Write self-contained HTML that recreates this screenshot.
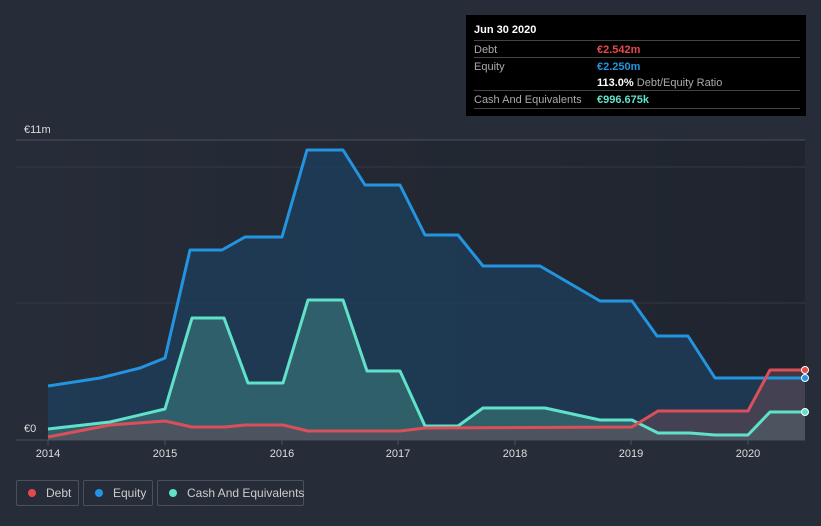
<!DOCTYPE html>
<html><head><meta charset="utf-8"><style>
body{margin:0;width:821px;height:526px;background:#262c38;font-family:"Liberation Sans",sans-serif;overflow:hidden;position:relative}
.tt{position:absolute;left:466px;top:15px;width:340px;height:101px;background:#000;color:#fff;font-size:11px}
.row{position:absolute;left:8px;width:326px;border-top:1px solid #444;height:16px}
.lab{position:absolute;left:0;top:3px;color:#aaa}
.val{position:absolute;left:123px;top:3px;font-weight:bold;white-space:nowrap}
.leg{position:absolute;top:480px;height:26px;border:1px solid #4a505c;border-radius:2px;color:#ccc;font-size:12px;line-height:25px;box-sizing:border-box;white-space:nowrap}
.dot{display:inline-block;width:8px;height:8px;border-radius:50%;margin:0 10px 0 11px;vertical-align:0}
</style></head><body>
<svg width="821" height="526" style="position:absolute;left:0;top:0">
<defs><linearGradient id="bg" x1="0" x2="1"><stop offset="0" stop-color="#262c38"/><stop offset="1" stop-color="#1b1f27"/></linearGradient></defs>
<rect x="16" y="140" width="789" height="300" fill="url(#bg)" opacity="0.6"/>
<line x1="16" y1="140" x2="805" y2="140" stroke="#4a505c"/>
<line x1="16" y1="167" x2="805" y2="167" stroke="#333a46"/>
<line x1="16" y1="303" x2="805" y2="303" stroke="#333a46"/>
<line x1="16" y1="440" x2="805" y2="440" stroke="#4a505c"/>
<polygon fill="#1e3f5e" opacity="0.75" points="48,440 48,386 100,378 140,368 165,358 190,250 222,250 245,237 282,237 307,150 343,150 365,185 400,185 425,235 458,235 483,266 540,266 600,301 632,301 657,336 688,336 715,378 805,378 805,440"/>
<polygon fill="#3a7a7a" opacity="0.6" points="48,440 48,429 110,422 165,409 192,318 224,318 248,383 283,383 308,300 343,300 367,371 400,371 425,426 458,426 483,408 545,408 600,420 632,420 658,433 690,433 715,435 748,435 770,412 805,412 805,440"/>
<polygon fill="#6a4a55" opacity="0.5" points="48,440 48,437 110,425 165,421 192,427 225,427 245,425 283,425 308,431 400,431 425,428 632,427 658,411 748,411 770,370 805,370 805,440"/>
<polyline fill="none" stroke="#2394df" stroke-width="3" stroke-linejoin="round" points="48,386 100,378 140,368 165,358 190,250 222,250 245,237 282,237 307,150 343,150 365,185 400,185 425,235 458,235 483,266 540,266 600,301 632,301 657,336 688,336 715,378 805,378"/>
<polyline fill="none" stroke="#60e1c9" stroke-width="3" stroke-linejoin="round" points="48,429 110,422 165,409 192,318 224,318 248,383 283,383 308,300 343,300 367,371 400,371 425,426 458,426 483,408 545,408 600,420 632,420 658,433 690,433 715,435 748,435 770,412 805,412"/>
<polyline fill="none" stroke="#d9505a" stroke-width="3" stroke-linejoin="round" points="48,437 110,425 165,421 192,427 225,427 245,425 283,425 308,431 400,431 425,428 632,427 658,411 748,411 770,370 805,370"/>
<circle cx="805" cy="370" r="3.5" fill="#e5484d" stroke="#fff"/>
<circle cx="805" cy="378" r="3.5" fill="#2394df" stroke="#fff"/>
<circle cx="805" cy="412" r="3.5" fill="#60e1c9" stroke="#fff"/>
<g fill="#ddd" font-size="11" font-family="Liberation Sans">
<text x="24" y="133">€11m</text><text x="24" y="432">€0</text>
<g text-anchor="middle"><text x="48" y="457">2014</text><text x="165" y="457">2015</text><text x="282" y="457">2016</text><text x="398" y="457">2017</text><text x="515" y="457">2018</text><text x="631" y="457">2019</text><text x="748" y="457">2020</text></g>
</g>
<g stroke="#4a505c"><line x1="48" y1="440" x2="48" y2="445"/><line x1="165" y1="440" x2="165" y2="445"/><line x1="282" y1="440" x2="282" y2="445"/><line x1="398" y1="440" x2="398" y2="445"/><line x1="515" y1="440" x2="515" y2="445"/><line x1="631" y1="440" x2="631" y2="445"/><line x1="748" y1="440" x2="748" y2="445"/></g>
</svg>
<div class="tt">
<div style="position:absolute;left:8px;top:9px;font-weight:bold">Jun 30 2020</div>
<div class="row" style="top:25px"><span class="lab">Debt</span><span class="val" style="color:#e5484d">€2.542m</span></div>
<div class="row" style="top:42px"><span class="lab">Equity</span><span class="val" style="color:#2394df">€2.250m</span></div>
<div class="row" style="top:59px;border-top:none"><span class="val" style="color:#fff">113.0% <span style="color:#aaa;font-weight:normal">Debt/Equity Ratio</span></span></div>
<div class="row" style="top:75px;height:17px;border-bottom:1px solid #444"><span class="lab">Cash And Equivalents</span><span class="val" style="color:#60e1c9">€996.675k</span></div>
</div>
<div class="leg" style="left:16px;width:63px"><span class="dot" style="background:#e5484d"></span>Debt</div>
<div class="leg" style="left:83px;width:70px"><span class="dot" style="background:#2394df"></span>Equity</div>
<div class="leg" style="left:157px;width:147px"><span class="dot" style="background:#60e1c9"></span>Cash And Equivalents</div>
</body></html>
